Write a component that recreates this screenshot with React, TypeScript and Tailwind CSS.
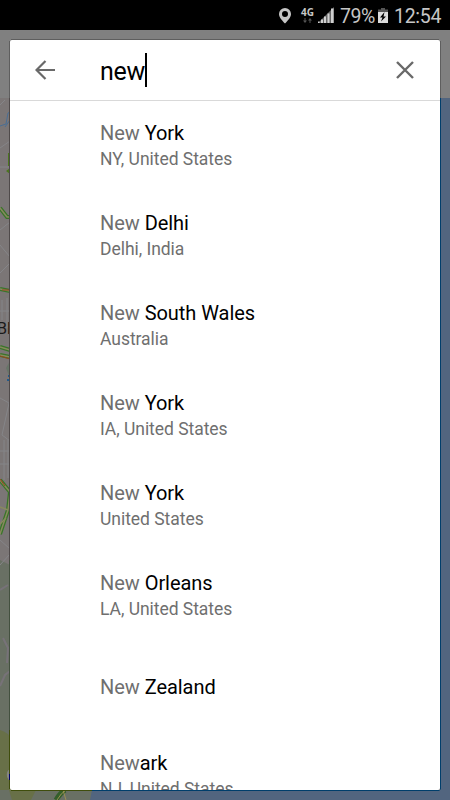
import React from 'react';

interface Place {
  match: string;
  rest: string;
  region?: string;
}

const places: Place[] = [
  { match: 'New', rest: ' York', region: 'NY, United States' },
  { match: 'New', rest: ' Delhi', region: 'Delhi, India' },
  { match: 'New', rest: ' South Wales', region: 'Australia' },
  { match: 'New', rest: ' York', region: 'IA, United States' },
  { match: 'New', rest: ' York', region: 'United States' },
  { match: 'New', rest: ' Orleans', region: 'LA, United States' },
  { match: 'New', rest: ' Zealand' },
  { match: 'New', rest: 'ark', region: 'NJ, United States' },
];

function App() {
  return (
    <div className="relative flex h-[800px] w-[450px] flex-col overflow-hidden bg-[#7b7676] font-['Roboto',sans-serif]">
      <MapBackdrop />
      <StatusBar />

      {/* Search dialog */}
      <div className="relative mx-[10px] mt-[10px] flex h-[750px] flex-col overflow-hidden rounded-[2px] bg-white">
        <div className="flex h-[61px] shrink-0 items-center border-b border-[#d9d9d9]">
          <button className="ml-[25px] w-[65px]">
            <BackIcon />
          </button>
          <div className="flex flex-1 items-center">
            <span className="w-[45px] pt-[4px] text-[25px] leading-[34px] tracking-[-0.3px] text-black">new</span>
            <span className="h-[34px] w-[2px] bg-black" />
          </div>
          <button className="mr-[26px]">
            <ClearIcon />
          </button>
        </div>

        <ul>
          {places.map((place, index) => (
            <PlaceRow key={index} place={place} />
          ))}
        </ul>
      </div>
    </div>
  );
}

function StatusBar() {
  return (
    <header className="relative flex h-[30px] shrink-0 items-center bg-black text-[#c6c6c6]">
      <svg className="mt-px ml-[279px] h-[16px] w-[12px]" viewBox="0 0 12 16" fill="currentColor">
        <path
          fillRule="evenodd"
          d="M6 0a6 6 0 0 0-6 6c0 3.6 3.2 6.3 6 9.6C8.800 12.300 12 9.600 12 6a6 6 0 0 0-6-6zm0 3a3 3 0 1 1 0 6 3 3 0 0 1 0-6z"
        />
      </svg>
      <div className="mt-px ml-[9px] flex w-[15px] flex-col items-center">
        <span className="font-['Open_Sans',sans-serif] text-[10px] leading-[9px] font-bold">4G</span>
        <svg className="mt-px h-[5px] w-[9px]" viewBox="0 0 9 5" fill="#555">
          <path d="M1.500 0h1v2.500H4L2 5 0 2.500h1.500zM6.500 5h1V2.500H9L7 0 5 2.500h1.500z" />
        </svg>
      </div>
      <svg className="ml-[3px] h-[16px] w-[16px]" viewBox="0 0 16 16">
        <path d="M0 16 16 0v16z" fill="#666" />
        <path d="M0 14.500h1.500V16H0zM3 12.500h2V16H3zM6 9.500h2V16H6zM9.500 6.500h2V16h-2zM13 1.500h2.500V16H13z" fill="#d0d0d0" />
      </svg>
      <span className="mt-[3px] ml-[6px] w-[35px] text-[19.5px] leading-[30px] tracking-[-0.5px] whitespace-nowrap">79%</span>
      <svg className="ml-[3px] h-[15px] w-[10px]" viewBox="0 0 10 15">
        <path d="M3 0h4v1.500h3V4H0V1.500h3z" fill="#555" />
        <path d="M0 4h10v11H0z" fill="#dcdcdc" />
        <path d="M6.500 4 2 9.500h2.500L3 13.500 8 8.500H5.500z" fill="#000" />
      </svg>
      <span className="mt-[3px] ml-[6px] text-[19.5px] leading-[30px] tracking-[-0.3px] whitespace-nowrap">12:54</span>
    </header>
  );
}

function PlaceRow({ place }: { place: Place }) {
  return (
    <li className="flex h-[90px] flex-col justify-center pl-[90px] whitespace-nowrap">
      <p className={`mb-[2px] text-[20px] leading-[24px] tracking-[-0.05px] text-black ${place.region ? '' : 'pt-[4px]'}`}>
        <span className="text-[#6f6f6f]">{place.match}</span>
        {place.rest}
      </p>
      {place.region && (
        <p className="text-[17.5px] leading-[25px] tracking-[-0.04px] text-[#6f6f6f]">{place.region}</p>
      )}
    </li>
  );
}

function BackIcon() {
  return (
    <svg className="h-[20px] w-[20px]" viewBox="0 0 20 20" fill="none" stroke="#696969" strokeWidth="2.200">
      <path d="M20 10H1.500M10.500 1 1.500 10l9 9" />
    </svg>
  );
}

function ClearIcon() {
  return (
    <svg className="h-[18px] w-[18px]" viewBox="0 0 18 18" stroke="#696969" strokeWidth="2.400">
      <path d="m1 1 16 16M17 1 1 17" />
    </svg>
  );
}

// Dimmed map that shows around the edges of the dialog
function MapBackdrop() {
  return (
    <svg className="absolute inset-0 h-[800px] w-[450px]" viewBox="0 0 450 800" fill="none">
      <path d="M0 560 10 565V800H0z" fill="#697064" />
      <path d="M0 730q8 2 12 10v60H0z" fill="#687048" />
      <path d="M0 790h92v10H0z" fill="#697064" />
      <path d="M9 790h27l-5 10H12z" fill="#687048" />
      <path d="M92 790h358v10H90z" fill="#52657f" />
      <path d="M440 98h10v702h-10z" fill="#52657f" />
      <path d="M0 30h450v68H0z" fill="#808080" />

      {/* Minor streets */}
      <g stroke="#858588">
        <path d="M0 105 5 100M0 148l10-7M0 167h10M0 230l10-8M0 245l10 12M0 273l10-10M2 300v20M7 298v30M0 311h10" />
        <path d="M0 398 9 403 2 435l8 6M0 451h10M4 440v40M8 440v38M0 464h10M0 540l10 9M0 565l10-11" />
      </g>
      <path d="M0 590l8-5M3 638l5 10-1 15M0 686l5-11 5-4" stroke="#777278" strokeWidth="2" />

      {/* River */}
      <path d="M0 126 6 124 8 113 10 112M5 127 10 120" stroke="#4a6e94" />
      <path d="M8 376h2M7 380h3" stroke="#235b8c" strokeWidth="2" />
      <path d="M8 153h2v13H8zM6 171l4-3v6z" fill="#4c7620" />
      <path d="M6 368l4-7v17z" fill="#687568" />

      {/* Main roads with traffic */}
      <g stroke="#397529" strokeWidth="4">
        <path d="M0 208 7 217h3" />
        <path d="M0 289 10 291" />
        <path d="M0 347 10 350M0 355 10 357" />
        <path d="M0 480 10 492 8 510 0 534" />
      </g>
      <g stroke="#88895f" strokeWidth="1.500">
        <path d="M0 208 7 217h3M0 289 10 291M0 347 10 350M0 355 10 357M0 480 10 492 8 510 0 534" />
        <path d="M0 507 8 510M0 524 6 518" />
      </g>
      <path d="M0 479 5 486M0 356 10 359M2 290h8" stroke="#99451f" />
      <path d="M56 800q4-7 9-10" stroke="#345f2b" strokeWidth="5" />
      <path d="M57 800q4-7 9-10M63 790l3 10" stroke="#9a9052" />

      <path d="M10 769q-4 2-3 8l3 5z" fill="#858585" />
      <text x="-3" y="334" fill="#191919" fontSize="16" fontFamily="Roboto, sans-serif">
        Bl
      </text>

      {/* Dialog edge, tinted by the map under it */}
      <path d="M11 39.500h428M9.500 41v57M440.500 41v57" stroke="#5e5e5e" />
      <path d="M9.500 98v462" stroke="#4f4a4a" />
      <path d="M9.500 560v170" stroke="#43503f" />
      <path d="M9.500 730v59M11 790.500h81" stroke="#3f4d0c" />
      <path d="M9.500 774v6" stroke="#000066" />
      <path d="M92 790.500h347.500M440.500 98v691.500" stroke="#003e6b" />
    </svg>
  );
}

export default App;
